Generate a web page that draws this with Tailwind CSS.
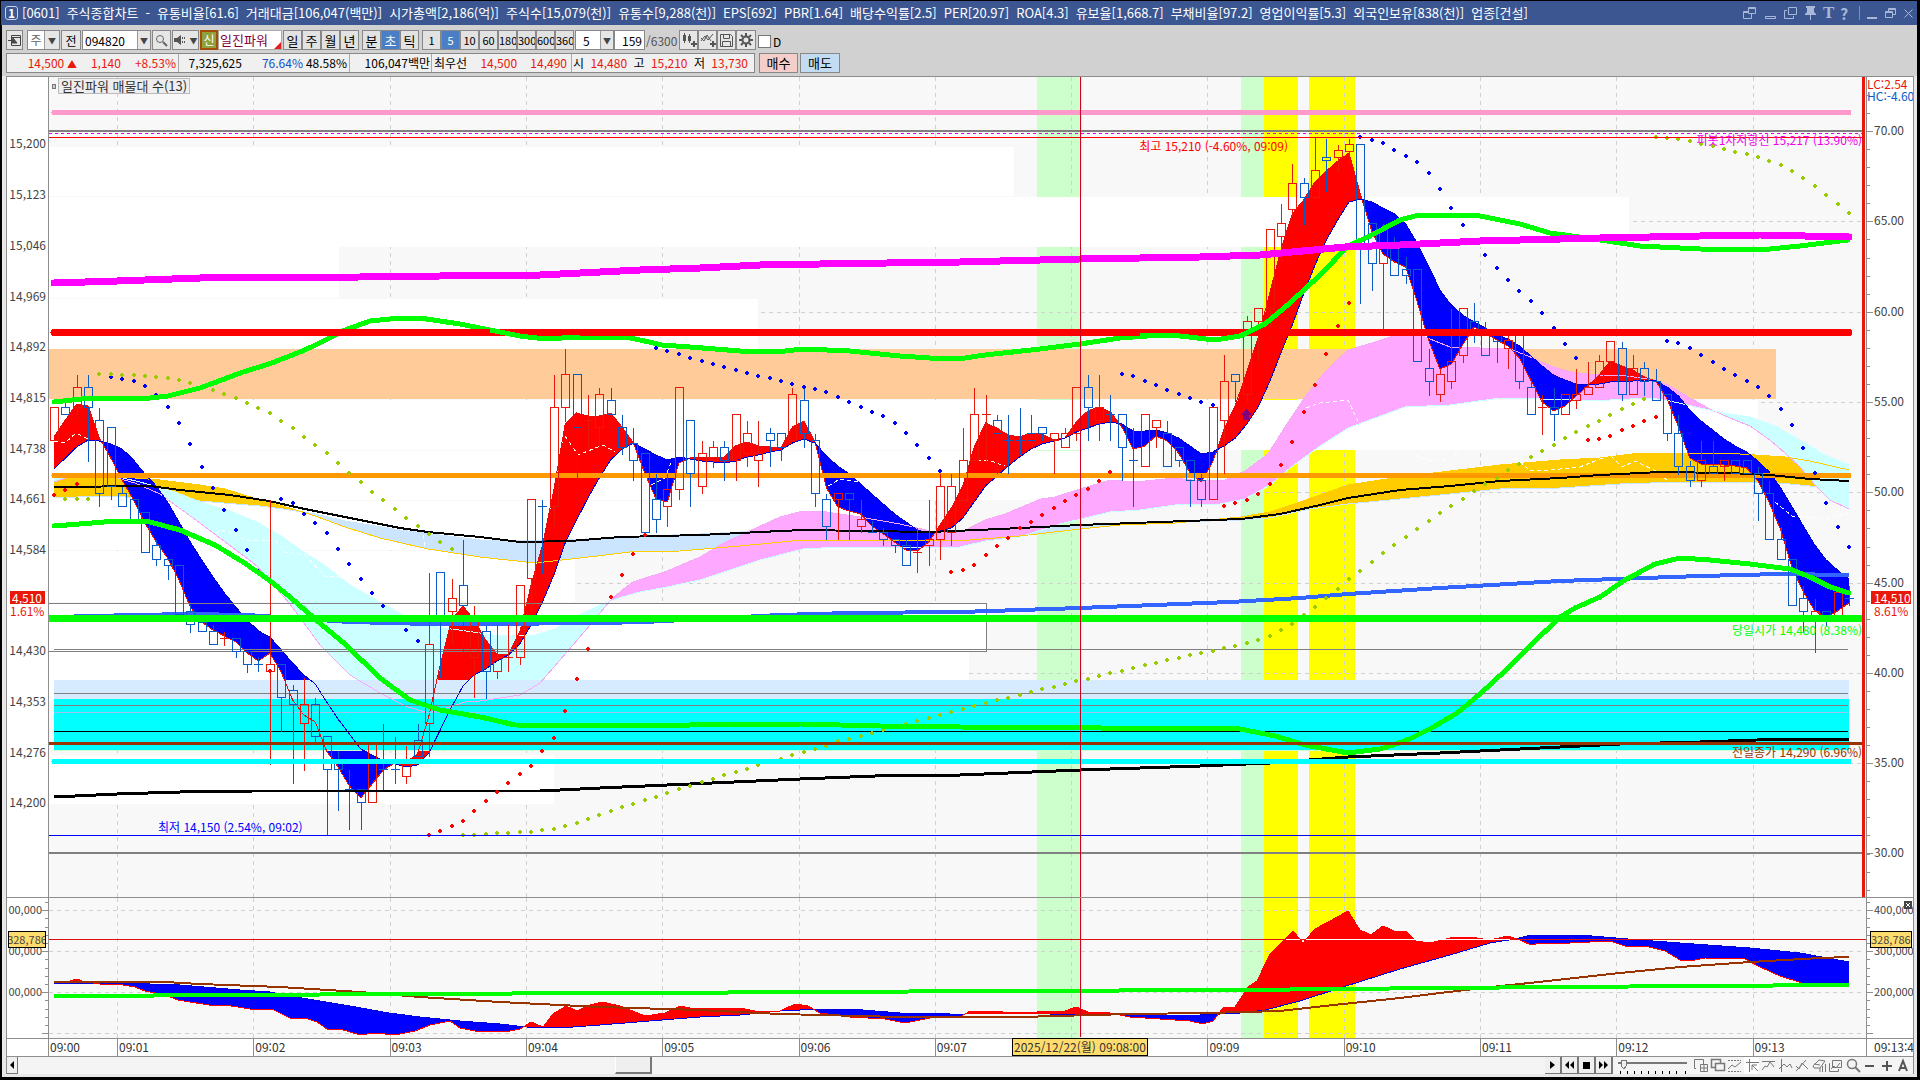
<!DOCTYPE html>
<html lang="ko">
<head>
<meta charset="utf-8">
<meta name="viewport" content="width=device-width, initial-scale=1">
<title>[0601] 주식종합차트</title>
<script src="https://cdn.jsdelivr.net/npm/@tailwindcss/browser@4"></script>
</head>
<body class="h-screen overflow-hidden bg-black font-['Noto_Sans_CJK_KR',sans-serif] text-[12px] leading-4 text-black">
<div class="flex h-full flex-col whitespace-nowrap pt-px pr-[3px] pb-[3px] pl-px">

  <!-- Title bar -->
  <header class="flex h-6 shrink-0 items-center bg-[#3b5691] pl-1 pr-1 text-white">
    <span class="flex h-[14px] w-[13px] items-center justify-center rounded-[3px] border border-[#c8d4ec] text-[12px] font-bold">1</span>
    <h1 class="ml-1 flex min-w-0 flex-1 gap-[7px] text-[13px] leading-5" id="title"></h1>
    <div class="flex items-center gap-[7px] text-[#a9b7d8]">
      <svg class="h-[14px] w-[14px]" viewBox="0 0 14 14" fill="none" stroke="currentColor"><path d="M5.5 1.5h7v6h-7zM5.5 2.5h7M5 5.500H.5v7h8V8M.5 6.500H5"/></svg>
      <svg class="h-[14px] w-[13px]" viewBox="0 0 13 14" fill="none" stroke="currentColor"><path d="M1.500 10.500h10v2h-10z"/></svg>
      <svg class="h-[14px] w-[14px]" viewBox="0 0 14 14" fill="none" stroke="currentColor"><path d="M4.500 1.500h8v7h-8zM3 4.500H.5v8h9V10"/></svg>
      <svg class="h-[14px] w-[11px]" viewBox="0 0 11 14" fill="currentColor"><path d="M1 0h9v2H9v4l2 2v1H6v5H5V9H0V8l2-2V2H1z"/></svg>
      <span class="w-[10px] text-center font-['Liberation_Serif',serif] text-[17px] font-bold">T</span>
      <span class="w-[8px] text-center text-[16px] font-bold">?</span>
      <i class="ml-1 h-[14px] w-px bg-[#7f8db4]"></i>
      <svg class="h-[14px] w-[11px]" viewBox="0 0 11 14" fill="currentColor"><path d="M0 11h10v2H0z"/></svg>
      <svg class="h-[14px] w-[12px]" viewBox="0 0 12 14" fill="none" stroke="currentColor"><path d="M3.500 5V2.500h7v6H8M3.500 3.500h7M.5 5.500h7v6h-7zM.5 6.500h7"/></svg>
      <svg class="h-[14px] w-[9px]" viewBox="0 0 9 14" fill="none" stroke="currentColor"><path d="M.5 3.500l8 8M8.500 3.500l-8 8"/></svg>
    </div>
  </header>

  <main class="ml-px flex min-h-0 flex-1 flex-col bg-[#d1d1d1]">
    <!-- Toolbar -->
    <div class="flex h-[25px] shrink-0 items-end pl-1 leading-[17px]">
      <button aria-label="메뉴" class="flex h-5 w-[17px] items-center justify-center border border-[#888] bg-[#e6e6e6]"><svg class="h-[13px] w-[13px]" viewBox="0 0 13 13" fill="none" stroke="#444"><path d="M3.500 1.500h9v10h-9zM3.500 3.500h9"/><path d="M0 6.500h5M5 4l4 5H4z" fill="#444"/></svg></button>
      <div class="ml-1 flex h-5 w-[33px] border border-[#888] bg-white"><span class="w-4 text-center text-[#666]">주</span><button aria-label="주기" class="flex w-[15px] items-center justify-center border-l border-[#999] bg-[#e6e6e6] text-[8px] text-[#444]">▼</button></div>
      <button class="ml-px h-5 w-[20px] border border-[#888] bg-[#e6e6e6]">전</button>
      <div class="ml-px flex h-5 w-[69px] border border-[#888] bg-white"><input aria-label="종목코드" value="094820" class="w-[54px] bg-white px-[2px] outline-none"><button aria-label="종목 목록" class="flex w-[13px] items-center justify-center border-l border-[#999] bg-[#e6e6e6] text-[8px] text-[#444]">▼</button></div>
      <button aria-label="검색" class="ml-px flex h-5 w-[19px] items-center justify-center border border-[#888] bg-[#e6e6e6]"><svg class="h-[13px] w-[13px]" viewBox="0 0 13 13" fill="none" stroke="#666"><circle cx="5" cy="5" r="3.500"/><path d="M8 8l4 4" stroke-width="2"/></svg></button>
      <button aria-label="소리" class="ml-px flex h-5 w-[27px] items-center justify-center gap-1 border border-[#888] bg-[#e6e6e6] text-[8px] text-[#444]"><svg class="h-[12px] w-[12px]" viewBox="0 0 12 12" fill="#555"><path d="M0 4h3l4-3v10L3 8H0zM8 3h1v2H8zM8 7h1v2H8zM10 3h1v2h-1zM10 7h1v2h-1z"/></svg>▼</button>
      <button class="ml-px h-5 w-[18px] border-2 border-[#a34f0b] bg-[#8fa03c] leading-4 text-white">신</button>
      <div class="relative h-5 w-[64px] border border-[#aaa] bg-white pl-px text-[13px] text-[#800040]">일진파워<svg class="absolute right-0 bottom-0 h-[7px] w-[7px]" viewBox="0 0 7 7"><path d="M7 0v7H0z" fill="#e02020"/></svg></div>
      <div class="ml-px flex text-[13px]" id="periods"></div>
      <div class="ml-[3px] flex text-[13px]" id="units"></div>
      <div class="ml-[3px] flex text-[11px]" id="counts"></div>
      <div class="ml-px flex h-5 w-[39px] border border-[#888] bg-white"><input aria-label="간격" value="5" class="w-[24px] bg-white px-[7px] outline-none"><button aria-label="간격 목록" class="flex w-[14px] items-center justify-center border-l border-[#999] bg-[#e6e6e6] text-[8px] text-[#444]">▼</button></div>
      <input aria-label="봉 개수" value="159" class="h-5 w-[31px] border border-[#888] bg-white pr-[2px] text-right outline-none">
      <span class="h-[18px] w-[34px] pl-px text-[#555]">/6300</span>
      <div class="flex text-[#555]">
        <button aria-label="차트 종류" class="flex h-5 w-[19px] items-center justify-center border border-[#888] bg-[#e6e6e6]"><svg class="h-[16px] w-[16px]" viewBox="0 0 16 16" fill="#555"><path d="M3 1h1v2h1v6H4v2H3V9H2V3h1zM8 2h1v2h1v5H9v2H8V9H7V4h1zM12 9h2v2h2v2h-2v2h-2v-2h-2v-2h2z"/></svg></button>
        <button aria-label="지표 추가" class="flex h-5 w-[19px] items-center justify-center border border-[#888] bg-[#e6e6e6]"><svg class="h-[16px] w-[16px]" viewBox="0 0 16 16" fill="none" stroke="#555"><path d="M1 9l4-5 3 4 5-6M1 6l3 3 3-6 4 6"/><path d="M12 9h2v2h2v2h-2v2h-2v-2h-2v-2h2z" fill="#555" stroke="none"/></svg></button>
        <button aria-label="저장" class="flex h-5 w-[19px] items-center justify-center border border-[#888] bg-[#e6e6e6]"><svg class="h-[15px] w-[15px]" viewBox="0 0 15 15" fill="none" stroke="#555"><path d="M1.500 1.500h10l2 2v10h-12zM4.500 1.500v4h6v-4M3.500 13V8.500h8V13"/></svg></button>
        <button aria-label="설정" class="flex h-5 w-[20px] items-center justify-center border border-[#888] bg-[#e6e6e6]"><svg class="h-[14px] w-[14px]" viewBox="0 0 14 14" fill="none" stroke="#555"><circle cx="7" cy="7" r="3.500" stroke-width="2"/><path d="M7 0v3M7 11v3M0 7h3M11 7h3M2 2l2 2M10 10l2 2M12 2l-2 2M2 12l2-2" stroke-width="2"/></svg></button>
      </div>
      <label class="ml-[2px] flex items-center gap-[2px]"><input type="checkbox" class="h-[13px] w-[13px] appearance-none border border-[#777] bg-white">D</label>
    </div>

    <!-- Quote strip -->
    <div class="flex h-[26px] shrink-0 items-start gap-1 pt-[3px] pl-1 leading-[18px]">
      <dl class="flex h-5 w-[749px] border border-[#888] bg-[#f0f0f0]">
        <div class="flex w-[172px] justify-end gap-[14px] border-r border-[#aaa] pr-[2px] text-[#e8190a]"><dd>14,500 <span class="text-[10px]">▲</span></dd><dd>1,140</dd><dd>+8.53%</dd></div>
        <div class="flex w-[171px] justify-end border-r border-[#aaa] pr-[2px]"><dd>7,325,625</dd><dd class="ml-5 text-[#1450c8]">76.64%</dd><dd class="ml-[3px]">48.58%</dd></div>
        <div class="w-[82px] border-r border-[#aaa] pr-px text-right">106,047백만</div>
        <div class="flex w-[140px] justify-between border-r border-[#aaa] pr-1 pl-[2px]"><dt>최우선</dt><dd class="text-[#e8190a]">14,500</dd><dd class="text-[#e8190a]">14,490</dd></div>
        <div class="flex flex-1 justify-between pr-[6px] pl-px"><dt>시</dt><dd class="text-[#e8190a]">14,480</dd><dt>고</dt><dd class="text-[#e8190a]">15,210</dd><dt>저</dt><dd class="text-[#e8190a]">13,730</dd></div>
      </dl>
      <button class="h-5 w-[39px] border border-[#888] bg-[#f4cfca] text-[13px]">매수</button>
      <button class="-ml-[2px] h-5 w-[40px] border border-[#888] bg-[#c4dcf2] text-[13px]">매도</button>
    </div>

    <div class="flex min-h-0 flex-1 flex-col bg-[#e8e8e8] pr-[3px] pb-[3px] pl-1">
      <div class="flex min-h-0 flex-1 flex-col border border-b-0 border-[#8e8e8e] bg-white">
        <!-- Price pane -->
        <section class="flex min-h-0 grow-[820] basis-0">
          <div class="relative w-[42px] shrink-0 overflow-hidden border-r border-[#8e8e8e] text-[#444]" id="leftAxis"></div>
          <div class="relative min-w-0 flex-1 overflow-hidden bg-[#f8f8f8]">
            <svg id="price" class="absolute h-full w-full" viewBox="49 77 1817 820" preserveAspectRatio="none" shape-rendering="crispEdges" fill="none"></svg>
            <div class="absolute top-px left-[3px] flex items-center gap-[2px] leading-[14px]"><i class="h-[5px] w-1 border border-[#777] bg-[#ccc]"></i><span class="h-4 border border-[#bbb] bg-[#eee] px-[2px] text-[13px] text-[#333]">일진파워 매물대 수(13)</span></div>
            <div class="absolute top-[7.400%] left-[60%] text-[#f00]">최고 15,210 (-4.60%, 09:09)</div>
            <div class="absolute top-[90.500%] left-[6%] text-[#00f]">최저 14,150 (2.54%, 09:02)</div>
            <div class="absolute top-[6.700%] right-1 text-[#e0e]">피봇1차저항선 15,217 (13.90%)</div>
            <div class="absolute top-[66.500%] right-1 text-[#0f0]">당일시가 14,480 (8.38%)</div>
            <div class="absolute top-[81.400%] right-1 text-[#930]">전일종가 14,290 (6.96%)</div>
            <i class="absolute top-0 right-px h-full w-[3px] bg-[#e8190a]"></i>
          </div>
          <div class="relative w-[47px] shrink-0 overflow-hidden border-l border-[#8e8e8e] text-[#444]" id="rightAxis">
            <div class="absolute top-px left-0 leading-3"><div class="text-[#e8190a]">LC:2.54</div><div class="text-[#0a5ac8]">HC:-4.60</div></div>
          </div>
        </section>
        <!-- Volume pane -->
        <section class="flex min-h-0 grow-[140] basis-0 border-t border-[#8e8e8e]">
          <div class="relative w-[42px] shrink-0 overflow-hidden border-r border-[#8e8e8e] text-[11px] text-[#444]" id="leftAxis2"></div>
          <div class="relative min-w-0 flex-1 bg-[#f8f8f8]">
            <svg id="vol" class="absolute h-full w-full" viewBox="49 898 1817 140" preserveAspectRatio="none" shape-rendering="crispEdges" fill="none"></svg>
          </div>
          <div class="relative w-[47px] shrink-0 overflow-hidden border-l border-[#8e8e8e] text-[11px] text-[#444]" id="rightAxis2">
            <button aria-label="닫기" class="absolute top-[3px] right-px z-10 h-[8px] w-[8px] bg-[#444]"><svg class="h-[8px] w-[8px]" viewBox="0 0 8 8" stroke="#fff"><path d="M2 2l4 4M6 2L2 6"/></svg></button>
          </div>
        </section>
        <!-- Time axis -->
        <div class="flex h-[18px] shrink-0 border-t border-[#8e8e8e] text-[#333]">
          <div class="w-[42px] shrink-0 border-r border-[#8e8e8e]"></div>
          <div class="relative flex-1" id="times"></div>
          <div class="w-[47px] shrink-0 overflow-hidden border-l border-[#8e8e8e] pl-[7px]">09:13:40</div>
        </div>
        <!-- Scroll and tools -->
        <div class="flex h-[18px] shrink-0 border-t border-[#8e8e8e] bg-[#f4f4f4]">
          <button aria-label="왼쪽" class="flex w-[11px] items-center justify-center border-r border-b border-[#777] bg-[#efefef]"><svg class="h-[8px] w-[4px]" viewBox="0 0 4 8"><path d="M4 0v8L0 4z"/></svg></button>
          <div class="flex flex-1"><div class="grow-[597] basis-0"></div><div class="w-[37px] border-r-2 border-b-2 border-l border-[#777] border-l-white bg-[#efefef]"></div><div class="grow-[892] basis-0"></div></div>
          <div class="flex">
            <button aria-label="재생" class="flex w-[17px] items-center justify-center border-r-2 border-b border-[#777] bg-[#efefef]"><svg class="h-[8px] w-[5px]" viewBox="0 0 5 8"><path d="M0 0v8l5-4z"/></svg></button>
            <button aria-label="뒤로" class="flex w-[17px] items-center justify-center border-r-2 border-b border-[#777] bg-[#efefef]"><svg class="h-[8px] w-[9px]" viewBox="0 0 9 8"><path d="M4 0v8L0 4zM9 0v8L5 4z"/></svg></button>
            <button aria-label="정지" class="flex w-[17px] items-center justify-center border-r-2 border-b border-[#777] bg-[#efefef]"><i class="h-[7px] w-[7px] bg-black"></i></button>
            <button aria-label="앞으로" class="flex w-[17px] items-center justify-center border-r-2 border-b border-[#777] bg-[#efefef]"><svg class="h-[8px] w-[9px]" viewBox="0 0 9 8"><path d="M0 0v8l4-4zM5 0v8l4-4z"/></svg></button>
          </div>
          <svg class="ml-[5px] h-[17px] w-[70px]" viewBox="0 0 70 17" fill="none" stroke="#777" shape-rendering="crispEdges"><path d="M0 5.500h69" stroke-width="2"/><path d="M3 3h5v6l-2 3-3-3z" fill="#efefef"/><path d="M2.500 14v3M9.500 14v3M16.500 14v3M23.500 14v3M30.500 14v3M37.500 14v3M44.500 14v3M51.500 14v3M58.500 14v3M67.500 14v3" stroke="#000"/></svg>
          <svg class="ml-[6px] h-[17px] w-[219px]" viewBox="1 0 219 17" fill="none" stroke="#777">
            <path d="M3 11.500H1.500v-9h9V8M7.500 7.500h7v7h-7zM11 7.500v7M7.500 11h7"/>
            <path d="M22 10.500h-3.500v-8h9V6M22.500 6.500h9v7h-9z" stroke-width="1.500"/>
            <path d="M35 3.500h13M35 14.500h13" stroke-dasharray="2 1"/><path d="M35 12l4-4 3 2 6-5"/>
            <path d="M51 0h15v17H51z" fill="#fff" stroke="none"/><path d="M53 5.500h13M56.500 2v13M59 8l6 6M59 8v5M59 8h5"/>
            <path d="M69 4.500h13M69 13l3-4 2 1 3-5 4 5"/>
            <path d="M88.500 2v13M86 12l5-5 3 3 3-3 2 4"/>
            <path d="M103 14L113 3M103 9l3 3 3-6 4 4 2 2"/>
            <path d="M120 9l6-6 6 1-5 7h-6zM121 7l6 1M127 11v4M129.500 9v6M132.500 7v8"/>
            <path d="M139.500 3.500h9v7h-9zM137 6.500h-.5v8h9V12M138 12l3-3 2 2 4-5"/>
            <circle cx="159" cy="7" r="4.500" stroke-width="1.500"/><path d="M162 10l5 5" stroke-width="2"/>
            <path d="M172 9h9M189 9h10M194 4v10" stroke="#555" stroke-width="2"/>
            <path d="M206 14l4-10 4 10M208 11h5" stroke="#555" stroke-width="2"/>
          </svg>
        </div>
      </div>
    </div>
  </main>
</div>

<script>
const $ = id => document.getElementById(id);
const add = (id, html) => $(id).insertAdjacentHTML('beforeend', html);

/* ---- bars of text and buttons ---- */
['[0601]','주식종합차트','-','유통비율[61.6]','거래대금[106,047(백만)]','시가총액[2,186(억)]','주식수[15,079(천)]','유통수[9,288(천)]','EPS[692]','PBR[1.64]','배당수익률[2.5]','PER[20.97]','ROA[4.3]','유보율[1,668.7]','부채비율[97.2]','영업이익률[5.3]','외국인보유[838(천)]','업종[건설]']
  .forEach(t => add('title', `<span>${t}</span>`));
const btn = (id, list, on) => list.forEach(t => add(id, t === on
  ? `<button class="h-5 w-[19px] overflow-hidden border border-[#888] bg-[#4a7fc6] text-white">${t}</button>`
  : `<button class="h-5 w-[19px] overflow-hidden border border-[#888] bg-[#e2e2e2]">${t}</button>`));
btn('periods', ['일','주','월','년']);
btn('units', ['분','초','틱'], '초');
btn('counts', ['1','5','10','60','180','300','600','3600'], '5');

/* ---- axes ---- */
const pctY = (y, top, h) => ((y - top) / h * 100) + '%';
const label = (id, y, t, top, h, right) => add(id, right
  ? `<span class="absolute right-[2px] -translate-y-1/2" style="top:${pctY(y, top, h)}">${t}</span>`
  : `<span class="absolute left-[7px] -translate-y-1/2" style="top:${pctY(y, top, h)}">${t}</span>`);
const tick = (id, y, top, h, cls) => add(id, `<i class="${cls}" style="top:${pctY(y, top, h)}"></i>`);
[[143,'15,200'],[194,'15,123'],[245,'15,046'],[296,'14,969'],[346,'14,892'],[397,'14,815'],[448,'14,738'],[498,'14,661'],[549,'14,584'],[650,'14,430'],[701,'14,353'],[752,'14,276'],[802,'14,200']]
  .forEach(([y, t]) => label('leftAxis', y, t, 77, 820, true));
add('leftAxis', `<div class="absolute left-[3px] w-[35px] leading-[13px] text-[#e8190a]" style="top:${pctY(591,77,820)}"><div class="bg-[#e8190a] pl-[2px] text-white">4,510</div><div>1.61%</div></div>`);
for (let k = 0; k < 9; k++) label('rightAxis', 130 + k * 90.3, (70 - k * 5) + '.00', 77, 820, false);
for (let y = 95; y < 897; y += 18.06) tick('rightAxis', y, 77, 820, 'absolute left-0 h-px w-[3px] bg-[#8e8e8e]');
for (let k = 0; k < 9; k++) tick('rightAxis', 131 + k * 90.3, 77, 820, 'absolute left-0 h-px w-[6px] bg-[#8e8e8e]');
add('rightAxis', `<div class="absolute left-1 w-10 leading-[13px] text-[#e8190a]" style="top:${pctY(591,77,820)}"><div class="bg-[#e8190a] pl-[3px] text-white">14,510</div><div class="pl-[3px]">8.61%</div></div>`);
[[909,'400,000'],[950,'300,000'],[991,'200,000']].forEach(([y, t]) => {
  add('leftAxis2', `<span class="absolute right-[6px] -translate-y-1/2" style="top:${pctY(y,898,140)}">${t.slice(1)}</span>`);
  label('rightAxis2', y, t, 898, 140, false);
});
for (let y = 902; y < 1036; y += 8.2) {
  tick('leftAxis2', y, 898, 140, 'absolute right-0 h-px w-[3px] bg-[#8e8e8e]');
  tick('rightAxis2', y, 898, 140, 'absolute left-0 h-px w-[3px] bg-[#8e8e8e]');
}
[910,951,992,1033].forEach(y => {
  tick('leftAxis2', y, 898, 140, 'absolute right-0 h-px w-[6px] bg-[#8e8e8e]');
  tick('rightAxis2', y, 898, 140, 'absolute left-0 h-px w-[6px] bg-[#8e8e8e]');
});
add('leftAxis2', `<div class="absolute left-px flex h-[17px] w-[38px] justify-center overflow-hidden border border-black bg-[#ffdc6e] leading-[15px]" style="top:${pctY(931,898,140)}">328,786</div>`);
add('rightAxis2', `<div class="absolute left-[3px] h-[17px] w-[42px] overflow-hidden border border-black bg-[#ffdc6e] leading-[15px]" style="top:${pctY(931,898,140)}">328,786</div>`);
for (let k = 0; k < 14; k++) {
  const x = k ? 117 + (k - 1) * 136.3 : 49;
  if (k !== 8) add('times', k
    ? `<span class="absolute top-0 h-full border-l border-[#8e8e8e] pl-px" style="left:${(x - 49) / 18.17}%">${k < 10 ? '09:0' : '09:'}${k}</span>`
    : `<span class="absolute top-0 left-px">09:00</span>`);
}
add('times', `<span class="absolute -top-px h-[18px] border border-black bg-[#ffdc6e] px-px leading-4" style="left:${(1012 - 49) / 18.17}%">2025/12/22(월) 09:08:00</span>`);

/* ---- drawing helpers ---- */
const X = i => 54.5 + 11.36 * i;
const rect = (x1, y1, x2, y2, c) => `<rect x="${x1}" y="${y1}" width="${x2 - x1}" height="${y2 - y1}" fill="${c}"/>`;
const pts = s => s.trim().split(/\s+/).map(p => p.split(',').map(Number));
const poly = (s, c, w, extra = '') => `<polyline points="${s}" stroke="${c}" stroke-width="${w}" stroke-linejoin="round" ${extra}/>`;
const at = (P, x) => {
  if (x <= P[0][0]) return P[0][1];
  for (let k = 1; k < P.length; k++) if (x <= P[k][0]) {
    const [a, b] = P[k - 1], [c, d] = P[k];
    return b + (d - b) * (x - a) / (c - a);
  }
  return P[P.length - 1][1];
};
/* Fill between two lines: one colour where A is on top, another where B is. */
const between = (A, B, ca, cb) => {
  let up = '', dn = '';
  for (let x = 54; x < 1849; x++) {
    const a = at(A, x), b = at(B, x), t = Math.min(a, b), h = Math.abs(a - b);
    if (h < 0.5) continue;
    const d = `M${x} ${t.toFixed(1)}h1v${h.toFixed(1)}h-1z`;
    if (a < b) up += d; else dn += d;
  }
  return `<path d="${up}" fill="${ca}"/><path d="${dn}" fill="${cb}"/>`;
};
const series = s => s.trim().split(/\s+/).map((y, i) => [X(i) - 0.5, +y]);
const str = P => P.map(p => p[0].toFixed(1) + ',' + p[1]).join(' ');
const dots = (i0, s, c) => s.trim().split(/\s+/).map((y, k) => y === '-' ? '' :
  `<path d="M${Math.round(X(i0 + k) - 0.5) - 2} ${y - 1}h1v-1h2v1h1v2h-1v1h-2v-1h-1z" fill="${c}"/>`).join('');
const RED = '#e8190a', BLU = '#0a5ac8';

/* ---- price pane ---- */
const fast = series(`437 420 404 406 438 458 480 500 523 542 558 580 607 622 630 636 642 653 661 653 672 700 715 722 751 767 786 798 784 770 763 762 754 716 665 620 606 620 640 654 654 632 585 545 490 424 413 416 416 413 427 443 473 499 502 463 458 457 457 457 446 442 446 447 448 427 421 442 488 507 511 514 526 534 542 550 551 542 525 508 486 447 423 428 435 437 433 434 440 438 422 411 407 412 427 449 446 436 441 453 473 482 462 429 405 372 338 294 250 214 200 182 171 161 153 194 231 254 262 267 302 340 369 364 345 327 333 340 346 358 380 402 411 406 396 386 375 361 366 370 377 381 399 427 458 464 464 465 466 468 481 503 530 568 592 611 617 611 603`);
const slow = series(`469 458 447 440 441 444 449 460 474 486 502 522 542 560 577 593 607 620 631 637 650 663 675 684 702 719 734 749 755 761 764 767 765 753 730 707 686 675 669 661 655 644 625 602 575 543 520 498 478 460 449 443 449 455 460 457 459 461 462 463 461 457 455 452 450 443 439 443 456 466 474 484 494 504 514 522 530 533 531 528 518 502 486 476 466 457 449 444 441 438 432 428 424 422 424 431 431 430 433 438 446 454 452 446 438 424 407 382 353 325 294 265 240 220 202 199 202 208 214 224 243 266 290 305 315 322 328 335 339 346 356 366 375 380 384 385 384 382 381 381 380 381 387 396 410 421 430 439 446 452 461 472 488 507 526 545 560 570 579`);
const pinkA = '54,482 75,475 88,474 110,476 135,483 160,494 200,523 257,566 269,580 290,604 320,645 350,675 380,693 405,706 428,713 450,707 465,702 480,701 520,695 540,683 560,660 585,631 610,601 622,590 633,582 667,571 700,557 720,545 745,533 780,517 803,511 820,511 860,517 900,524 930,531 960,533 985,520 1005,514 1041,499 1055,497 1080,489 1110,480 1135,482 1175,478 1200,481 1225,480 1245,471 1268,454 1285,427 1305,397 1325,372 1348,350 1375,342 1403,333 1420,335 1450,347 1510,349 1533,358 1553,367 1575,373 1600,375 1620,375 1655,380 1670,386 1690,398 1710,409 1730,418 1750,426 1770,440 1785,453 1800,467 1815,485 1830,500 1849,509';
const cyanB = '54,477 80,473 110,475 140,482 175,492 200,502 230,511 257,522 281,536 305,553 320,562 350,585 380,602 403,615 430,626 480,633 500,636 535,635 555,629 575,617 600,605 622,597 640,592 667,587 700,580 730,570 760,560 803,549 840,547 880,547 940,548 960,547 985,541 1020,537 1060,524 1110,512 1140,510 1175,505 1220,504 1245,499 1270,485 1290,468 1320,446 1348,428 1375,418 1405,407 1450,405 1500,398 1540,399 1575,400 1610,400 1650,398 1670,401 1700,408 1730,414 1750,417 1775,426 1800,440 1825,455 1849,465';
const gold = '54,478 110,475 135,478 160,480 200,485 225,489 257,499 290,508 315,516 345,527 380,538 428,549 480,557 535,563 580,558 630,552 680,551 740,546 803,540 850,540 930,541 970,540 1020,536 1080,529 1120,525 1175,523 1241,517 1270,512 1300,502 1348,485 1400,477 1450,471 1500,465 1560,460 1600,458 1640,453 1690,453 1740,454 1785,457 1810,461 1849,470';
const light = '54,498 100,496 150,498 200,501 260,506 290,510 315,514 345,521 400,530 440,535 480,540 550,541 620,537 700,534 760,531 803,531 930,532 960,532 1020,528 1080,525 1120,524 1241,520 1268,518 1310,509 1348,504 1400,499 1450,494 1500,489 1560,488 1620,484 1680,482 1740,482 1790,484 1820,487 1849,490';

const stripes = [[1037,1082,'#cfc'],[1241,1264,'#cfc'],[1264,1298,'#ff0'],[1309,1355,'#ff0']];
const gridV = (y1, y2) => { let d = ''; for (let k = 0; k < 13; k++) d += `M${Math.round(117 + k * 136.3)}.5 ${y1}V${y2}`; return `<path d="${d}" stroke="#d0d0d0" stroke-dasharray="4 4"/>`; };

let g = stripes.map(([a, b, c]) => rect(a, 77, b, 897, c)).join('') + gridV(77, 897);
for (let k = 0; k < 9; k++) g += `<path d="M49 ${Math.round(131 + k * 90.3)}.5H1863" stroke="#d0d0d0" stroke-dasharray="4 4"/>`;
g += [[147,196,1014],[197,247,1629],[247,298,339],[299,349,758],[400,450,1758],[451,500,1161],[501,550,934],[551,602,575],[603,651,987],[652,701,969],[755,804,554]]
  .map(([a, b, x]) => rect(49, a, x, b, '#fff')).join('');
g += rect(49, 349, 1776, 399, '#fc9');
g += between(pts(gold), pts(light), '#fc0', '#cce5ff') + poly(gold, '#fc0', 1) + poly(light, '#cce5ff', 1);
g += between(pts(pinkA), pts(cyanB), '#ffa8ff', '#cff');
g += between(fast, slow, '#f00', '#00f');
g += rect(54, 680, 1849, 699, '#d6ebff') + rect(54, 699, 1849, 750, '#0ff') + rect(54, 750, 1849, 751, '#cfc');
g += poly(pinkA, '#f5a8f5', 1) + poly(cyanB, '#cff', 1) + poly(gold, '#fc0', 1) + poly(str(fast), '#e01010', 1) + poly(str(slow), '#0000d0', 1);
g += '215,533 225,530 245,540 275,540 285,552 305,555 325,576 340,577|1306,408 1320,403 1348,400 1358,421|1415,455 1430,461 1450,459 1460,450|1510,452 1530,471 1550,470 1580,467 1610,455 1622,467 1635,461 1660,473 1670,484 1750,486|565,436 578,455 603,445 615,452|54,441 65,443 76,433 90,440|828,486 840,479 860,482 870,489|651,485 665,478 672,460|970,460 988,460 1005,466|423,535 425,548|1775,502 1792,516 1825,519 1849,513'
  .split('|').map(s => poly(s, '#fff', 1, 'stroke-dasharray="4 3"')).join('');
g += '<path d="M54 693.5H1848M54 705.5H1848M54 649.5H1848M49 603.5H986.5V651.5H49" stroke="#808080"/><path d="M54 712.5H1848" stroke="#a0c0f0"/><path d="M54 731.5H1848" stroke="#000"/>';

const candles = `r407,407,440,440 b400,407,414,414 r374,387,407,414 b374,387,407,461 b407,420,493,506 b427,427,486,499 b486,493,506,506 b499,499,519,519 b512,512,552,552 b539,545,559,565 b559,559,565,579 b565,565,614,614 b604,611,624,632 b622,622,631,631 b624,631,644,644 r631,638,638,645 b638,638,651,657 b651,651,664,672 b656,664,664,671 r499,664,671,764 b664,664,697,731 b684,690,704,783 r677,704,723,770 b697,704,736,741 b736,736,769,835 b750,763,769,810 b769,789,789,829 b789,789,802,829 r744,744,802,802 b723,769,769,790 b736,769,769,783 r745,763,776,783 b723,740,756,756 r572,644,723,756 b572,572,618,677 r578,598,611,644 b539,585,605,651 r605,620,657,697 b625,631,671,698 r624,657,671,678 r624,657,657,671 r585,585,657,664 r499,499,578,612 b499,506,506,573 r374,407,506,526 r348,374,407,421 b374,374,427,480 r394,420,420,447 r387,394,427,447 b387,400,414,433 b414,427,447,454 b427,443,460,480 b453,453,532,532 b473,499,519,532 r473,489,506,526 r387,387,489,499 b420,420,473,506 r440,453,486,493 r440,447,460,467 b440,447,460,480 r414,414,460,480 r420,433,453,466 r420,453,460,486 b427,433,440,466 b433,433,447,460 r387,394,440,440 b387,400,433,447 b433,440,493,506 b493,499,526,539 r493,493,499,539 b493,493,499,539 r499,519,526,532 b520,532,532,532 b527,532,539,545 b539,539,545,552 b539,545,565,565 r527,552,552,572 r499,539,545,565 r473,486,539,559 r473,486,532,545 r427,460,500,500 r387,414,460,460 r394,414,414,460 b414,420,433,473 b414,440,440,473 b407,440,440,454 b414,433,440,440 b427,427,433,440 r433,433,440,473 r427,433,447,447 r387,387,433,440 b374,387,407,440 r374,407,420,440 b394,414,414,440 b414,414,447,480 b427,460,460,506 r414,414,466,466 r420,420,427,447 b420,433,466,466 b447,447,460,466 b460,460,480,506 b473,480,499,506 r407,407,499,499 r354,381,420,473 b374,374,381,401 r315,321,394,401 r308,308,321,361 r229,229,308,337 r203,223,236,260 r163,183,209,215 b177,183,197,224 r137,170,197,197 b138,157,160,191 r144,150,157,171 r138,144,151,164 b144,144,243,303 b223,223,263,290 r223,229,263,329 b236,243,275,275 b256,269,275,283 b269,269,361,361 b348,368,381,395 r368,374,394,401 r308,361,381,388 r308,308,355,362 b302,321,329,342 b321,335,355,355 b335,335,341,362 r335,340,348,368 b335,335,381,388 b381,387,414,414 r394,407,407,434 b387,407,414,440 r394,394,414,414 r368,394,400,408 r361,387,394,394 r354,361,387,387 r341,341,361,369 b341,348,394,400 r354,368,394,394 b361,368,381,395 b368,381,400,400 b394,394,433,440 b414,433,466,474 b460,466,480,486 r440,460,480,486 b440,466,473,473 r460,460,466,480 b460,460,473,473 b460,460,473,473 b466,473,493,520 b480,493,539,539 b526,539,559,559 b559,559,605,605 b585,598,611,632 r598,611,616,652 b611,611,616,625 r592,592,616,616 b585,598,598,605`.split(' ');
let cr = '', cb = '';
candles.forEach((c, i) => {
  const [h, t, b, l] = c.slice(1).split(',').map(n => +n + 0.5), x = Math.floor(X(i)) + 0.5;
  let d = `M${x} ${h}V${t}M${x} ${b}V${l}`;
  d += t === b ? `M${x - 4.5} ${t}h9` : `M${x - 4} ${t}h8V${b}h-8z`;
  if (c[0] === 'r') cr += d; else cb += d;
});

const green = '54,402 90,398 150,398 168,396 200,388 243,372 269,364 300,352 320,343 345,330 370,321 400,318 420,318 460,324 490,330 520,336 545,339 580,337 625,337 640,340 662,345 690,347 740,351 785,351 803,349 850,351 900,356 945,359 965,358 985,355 1040,349 1080,344 1120,338 1160,335 1180,336 1215,340 1240,336 1265,324 1290,303 1320,275 1348,246 1370,236 1400,220 1415,216 1450,215 1480,216 1520,224 1550,233 1600,240 1640,246 1700,249 1760,250 1800,246 1848,240';
const green2 = '54,526 117,521 150,522 180,530 215,545 243,562 269,580 290,597 315,619 345,644 380,678 410,700 440,710 480,717 515,725 650,726 730,724 800,724 880,726 960,727 1240,729 1275,736 1305,745 1348,753 1380,749 1405,741 1430,729 1457,713 1480,694 1506,670 1530,646 1560,617 1575,608 1600,597 1625,580 1655,564 1680,558 1710,560 1750,564 1790,569 1810,577 1830,587 1849,593';
const cap = 'stroke-linecap="round"';
g += poly('54,475.5 1849,475.5', '#f90', 5, cap);
g += poly('54,487 150,486 180,490 230,495 269,501 300,508 350,518 400,528 428,532 480,537 520,542 570,541 620,537 700,535 760,532 803,530 930,532 1000,529 1080,525 1160,522 1241,519 1280,514 1320,505 1348,498 1400,490 1450,486 1500,481 1560,478 1600,475 1660,472 1730,473 1770,475 1810,479 1849,481', '#000', 2);
g += poly('54,617 134,615 190,614 248,615 349,622 430,624 480,624 600,623 645,622 780,615 850,613 960,612 1080,608 1230,602 1300,598 1348,594 1440,588 1560,581 1700,576 1780,574 1849,575', '#36f', 4);
g += `<path d="${cr}" stroke="${RED}"/><path d="${cb}" stroke="${BLU}"/>`;
g += poly('54,797 117,794 180,792 253,791 540,791 600,788 690,784 800,779 900,775 960,775 1080,770 1200,766 1270,763 1348,757 1440,753 1560,747 1620,744 1700,742 1785,739 1849,739', '#000', 3);
g += dots(5, '377 379 381 386 395 407 423 444 467 488 510 530 550 571 - 499 503 514 523 533 549 564 579 593 606 - 630 641', '#00f')
  + dots(53, '348 351 354 358 361 364 367 370 373 376 378 381 384 387 389 392 397 402 407 412 416 423 433 445 458 471', '#00f')
  + dots(94, '374 376 381 385 390 394 398 402 405', '#00f')
  + dots(115, '137 140 143 150 156 162 173 189 208 225 - 255 268 280 291 301 313 328 344 358', '#00f')
  + dots(142, '341 343 348 355 362 369 375 381 387 396 409 425 448 473 503 527 547', '#00f')
  + dots(0, '495 490 484', '#f00') + dots(19, '671', '#f00')
  + dots(33, '835 831 826 821 811 801 792 783 774 766 751 738 711 679 649 - 597 575 554 535', '#f00')
  + dots(79, '572 570 565 555 546 538 528 522 515 508 501 495 489 481 472', '#f00')
  + dots(103, '506 503 500 494 484 465 442 412 385 354 326 303', '#f00')
  + dots(135, '440 439 436 430 426 421 417', '#f00')
  + dots(1, '499 499 499 374 374 375 375 376 377 378 380 383 387 390 394 398 403 408 413 421 428 437 445 453 463 473 482 492 500 509 518 526 534 542 549', '#9c0')
  + dots(36, '835 835 834 833 833 832 832 830 829 826 823 819 815 811 807 804 800 797 793 789 786 782 779 775 772 769 765 - 759 755 752 749 746 741 739 736 733 730 727 724 721 718 715 712 709 706 703 700 698 695 692 689 687 684 681 679 676 673 671 668 665 663 660 658 655 653 651 648 646 643 640 636 630 624 615 607 598 589 579 571 562 553 545 537 529 521 513 506 499 491 484 478 470 464 457 451 445 438 432 426 421 415 409 404 399', '#9c0')
  + dots(141, '137 138 139 141 144 146 149 152 154 157 161 165 171 178 186 195 204 213', '#9c0');
g += poly('54,112.5 1849,112.5', '#f9c', 5, cap);
g += poly(green, '#0f0', 5, cap) + poly(green2, '#0f0', 5, cap);
g += poly('54,332.5 1849,332.5', '#f00', 7, cap);
g += `<path d="M490 330L520 336L545 339L580 337M1140 336L1160 335L1180 336L1215 340L1240 336L1265 324L1290 303L1320 275" stroke="#0f0" stroke-width="5"/>`;
g += rect(49, 615, 1863, 622, '#0f0') + rect(49, 742, 1863, 745, '#930') + poly('54,761.5 1849,761.5', '#0ff', 5, cap);
g += poly('54,283 117,281 200,278 360,277 480,275.5 520,276 560,274 640,270 700,268 760,265 850,263.5 960,262 1080,259 1200,257 1260,255 1345,247 1400,245 1480,241 1600,238 1700,236 1760,235 1849,237', '#f0f', 7, cap);
g += rect(49, 130, 1863, 132, '#808080') + '<path d="M49 133.5H1863" stroke="#e0e" stroke-dasharray="3 3"/>' + rect(49, 137, 1863, 138, '#f00');
g += rect(49, 835, 1863, 836, '#00f') + rect(49, 852, 1863, 854, '#808080');
g += '<path d="M1246 409l6 6h-3v5h-6v-5h-3z" fill="#800080"/>' + rect(1080, 77, 1081, 897, '#d00020');
$('price').innerHTML = g;

/* ---- volume pane ---- */
const vf = '54,981 70,981 77,979 85,982 100,984 117,984 135,987 145,991 165,995 178,1000 215,1006 225,1005 250,1009 272,1009 290,1018 305,1018 317,1022 327,1029 340,1029 360,1035 375,1033 395,1035 415,1031 430,1025 450,1021 460,1028 480,1032 510,1031 520,1029 531,1022 543,1027 553,1014 566,1006 577,1011 590,1005 602,1002 620,1006 645,1016 665,1013 680,1006 690,1008 710,1008 725,1009 740,1008 755,1011 780,1011 795,1004 808,1006 820,1013 850,1017 885,1019 905,1023 930,1018 960,1017 970,1011 995,1011 1010,1013 1065,1011 1076,1007 1088,1012 1110,1013 1130,1017 1160,1019 1190,1021 1203,1024 1213,1021 1223,1008 1235,1007 1248,987 1257,981 1270,954 1280,944 1293,931 1303,943 1315,929 1330,921 1348,911 1360,930 1371,935 1383,926 1394,931 1406,931 1416,941 1430,943 1450,938 1470,937 1490,940 1508,936 1520,940 1531,945 1540,943 1570,943 1610,941 1625,946 1645,946 1665,951 1680,960 1690,961 1705,958 1745,959 1760,967 1780,976 1802,983 1830,985 1849,984';
const vs = '54,983 120,983 180,985 240,990 270,992 290,996 320,1001 350,1006 389,1013 420,1017 460,1021 500,1024 526,1027 560,1028 600,1025 662,1020 700,1017 740,1015 780,1011 820,1009 850,1009 900,1013 950,1014 1050,1014 1120,1015 1200,1015 1240,1013 1265,1010 1300,1001 1343,987 1400,969 1450,955 1490,943 1515,939 1531,935 1580,935 1616,938 1640,940 1680,943 1750,948 1800,953 1849,962';
let v = stripes.map(([a, b, c]) => rect(a, 898, b, 1038, c)).join('') + gridV(898, 1038);
[910,951,992,1033].forEach(y => v += `<path d="M49 ${y}.5H1863" stroke="#d0d0d0" stroke-dasharray="4 4"/>`);
v += between(pts(vf), pts(vs), '#f00', '#00f') + poly(vs, '#0000e0', 1) + poly(vf, '#f00', 1);
v += poly('54,982 165,982 200,984 280,987 360,992 420,997 500,1002 600,1007 700,1010 780,1014 900,1017 1020,1017 1130,1014 1207,1013 1280,1011 1343,1004 1400,998 1440,993 1500,986 1520,984 1620,973 1680,967 1750,962 1820,958 1849,957', '#930', 2);
v += poly('54,996 253,995 389,994 640,993 1000,991 1241,990 1440,988 1560,987 1700,986 1849,985', '#0f0', 4);
v += rect(49, 939, 1866, 940, '#e01010') + '<path d="M1286 939.5H1300M1306 939.5H1510" stroke="#fff"/>' + rect(1080, 898, 1081, 1037, '#d00020');
$('vol').innerHTML = v;
</script>
</body>
</html>
